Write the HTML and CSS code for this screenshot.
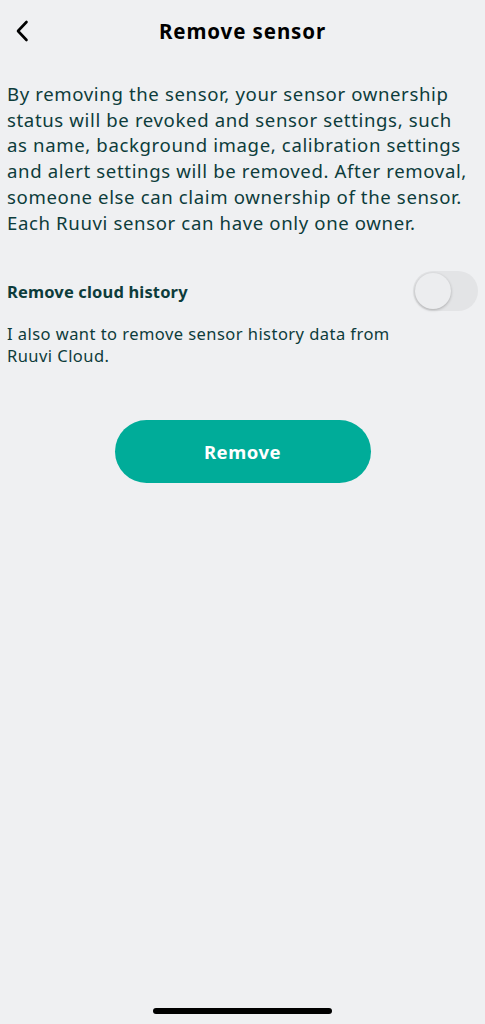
FILE: index.html
```html
<!doctype html>
<html>
<head>
<meta charset="utf-8">
<title>Remove sensor</title>
<link rel="stylesheet" href="styles.css">
</head>
<body>
<div class="page">
	<div class="topbar">
		<a class="back" href="#">
			<svg width="14" height="22" viewBox="0 0 14 22"><path d="M11.5 2 L3 11 L11.5 20" fill="none" stroke="#000" stroke-width="2.6" stroke-linecap="round" stroke-linejoin="round"/></svg>
		</a>
		<h1>Remove sensor</h1>
	</div>

	<p class="intro">By removing the sensor, your sensor ownership status will be revoked and sensor settings, such as name, background image, calibration settings and alert settings will be removed. After removal, someone else can claim ownership of the sensor. Each Ruuvi sensor can have only one owner.</p>

	<div class="option">
		<span class="option_title">Remove cloud history</span>
		<span class="switch"><i></i></span>
	</div>
	<p class="option_desc">I also want to remove sensor history data from Ruuvi Cloud.</p>

	<div class="btnbox"><a class="btn" href="#">Remove</a></div>
</div>
<div class="homebar"></div>
</body>
</html>
```

FILE: styles.css
```css
*{ margin:0; padding:0}
html,body{ height:100%}
body{ background:#eff0f2; font-family:"Noto Sans","Open Sans",sans-serif; color:#0d3c3b; position:relative}
a{ text-decoration:none}

.topbar{ height:62px; display:flex; align-items:center; justify-content:center; position:relative}
.topbar h1{ font-size:20.5px; font-weight:700; color:#000; letter-spacing:0.9px}
.back{ position:absolute; left:15px; top:20px; display:block; width:14px; height:22px}

.intro{ padding:19px 12px 0 7px; font-size:18.6px; line-height:25.7px; letter-spacing:0.62px}

.option{ display:flex; align-items:center; justify-content:space-between; padding:36px 7px 0 7px}
.option_title{ font-size:16.5px; font-weight:700; letter-spacing:0.15px}
.switch{ width:65px; height:40px; border-radius:20px; background:#e3e4e6; position:relative}
.switch i{ position:absolute; left:2px; top:2px; width:36px; height:36px; border-radius:50%; background:#ecedef; box-shadow:0 1px 3px rgba(0,0,0,0.25)}

.option_desc{ padding:12px 80px 0 7px; font-size:16.5px; line-height:22px; letter-spacing:0.45px}

.btnbox{ display:flex; justify-content:center; padding-top:53px}
.btn{ width:256px; height:63px; border-radius:32px; background:#00ac99; color:#fff; font-size:18.5px; font-weight:700; letter-spacing:0.5px; display:flex; align-items:center; justify-content:center}

.homebar{ position:absolute; left:153px; bottom:10px; width:179px; height:6px; border-radius:3px; background:#000}
```
